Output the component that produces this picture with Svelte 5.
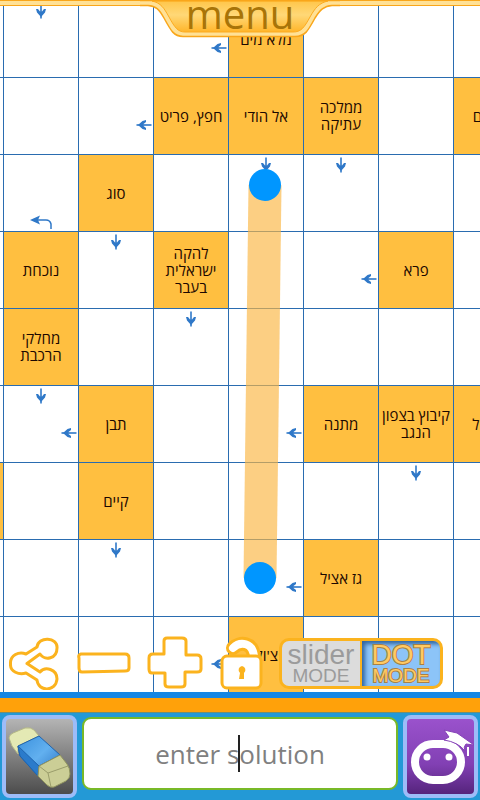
<script>
  const COLS = 8;
  const ROWS = 9;

  // Clue squares, keyed by "row-column"; each entry lists the text lines.
  const clues = {
    '0-4': ['מלא מים'],
    '1-3': ['חפץ, פריט'],
    '1-4': ['אל הודי'],
    '1-5': ['ממלכה', 'עתיקה'],
    '1-7': ['שמיים'],
    '2-2': ['סוג'],
    '3-1': ['נוכחת'],
    '3-3': ['להקה', 'ישראלית', 'בעבר'],
    '3-6': ['פרא'],
    '4-1': ['מחלקי', 'הרכבת'],
    '5-2': ['תבן'],
    '5-5': ['מתנה'],
    '5-6': ['קיבוץ בצפון', 'הנגב'],
    '5-7': ['מבוטל'],
    '6-0': [],
    '6-2': ['קיים'],
    '7-5': ['גז אציל'],
    '8-4': ["צ'וק"]
  };

  // Direction in which the answer is written from a square.
  const arrows = {
    '0-1': 'down', '2-4': 'down', '2-5': 'down', '3-2': 'down',
    '4-3': 'down', '5-1': 'down left', '6-6': 'down', '7-2': 'down',
    '0-3': 'left', '1-2': 'left', '3-5': 'left',
    '5-4': 'left', '7-4': 'left', '8-3': 'left', '2-1': 'turn'
  };

  const cells = Array.from({ length: COLS * ROWS }, (_, i) => {
    const key = `${Math.floor(i / COLS)}-${i % COLS}`;
    return { key, clue: clues[key], arrows: (arrows[key] ?? '').split(' ').filter(Boolean) };
  });

  let solution = $state('');
  let mode = $state('dot');
</script>

<main class="app">
  <section class="board">
    <div class="grid">
      {#each cells as cell (cell.key)}
        <div class="cell" class:clue={cell.clue}>
          {#if cell.clue}
            <div class="text" dir="rtl">
              {#each cell.clue as line}<span>{line}</span>{/each}
            </div>
          {/if}
          {#each cell.arrows as arrow}
            {#if arrow === 'turn'}
              <svg class="arrow turn" viewBox="0 0 22 16" width="22" height="16">
                <path d="M21 15V10Q20 6 16 6H4" fill="none" stroke="#2f78c8" stroke-width="1.5" />
                <path d="M0 6L10 1.500L8 6L10 10.500Z" fill="#2f78c8" />
              </svg>
            {:else}
              <svg class="arrow {arrow}" viewBox="0 0 16 16" width="16" height="16">
                <g transform={arrow === 'left' ? 'rotate(90 8 8)' : undefined}>
                  <path d="M8 0.500V15.500" fill="none" stroke="#2f78c8" stroke-width="1.600" />
                  <path d="M3 6L5 6L7 8.500H9L11 6L13 6L12 9.500L8 14L4 9.500Z" fill="#2f78c8" />
                </g>
              </svg>
            {/if}
          {/each}
        </div>
      {/each}
    </div>

    <svg class="selection" viewBox="0 0 480 692" width="480" height="692" aria-hidden="true">
      <path d="M265 185L260 578" stroke="#fbb643" stroke-opacity="0.66" stroke-width="33" />
      <circle cx="265" cy="185" r="16" fill="#0096ff" />
      <circle cx="260" cy="578" r="16" fill="#0096ff" />
    </svg>

    <header class="top">
      <button class="menu" type="button">
        <svg viewBox="0 0 200 38" width="200" height="38" aria-hidden="true">
          <defs>
            <linearGradient id="tab" x1="0" y1="0" x2="0" y2="1">
              <stop offset="0" stop-color="#ffc64a" />
              <stop offset="0.450" stop-color="#ffd877" />
              <stop offset="1" stop-color="#ffb52a" />
            </linearGradient>
          </defs>
          <path d="M0 0H200V5.500H192C184 6 180 10 175 18C168 31 165 36.500 155 36.500H43C34 36.500 31 31 24 18C19 9 16 6 8 5.500H0Z" fill="#ffe196" />
          <path d="M12 1H188C179 3 175 8 170 17C164 28 161 32 153 32H45C38 32 35 28 29 17C24 8 21 3 12 1Z" fill="url(#tab)" stroke="#fcab20" stroke-width="1" />
          <path d="M0 0.500H200" stroke="#f9a61a" stroke-width="1.500" />
          <path d="M0 5.500H8C16 6 19 9 24 18C31 31 34 36.500 43 36.500H155C165 36.500 168 31 175 18C180 10 184 6 192 5.500H200" fill="none" stroke="#f9a61a" stroke-width="1.500" />
        </svg>
        <span>menu</span>
      </button>
    </header>

    <div class="tools">
      <button class="tool share" type="button" aria-label="Share">
        <svg viewBox="0 0 52 54" width="52" height="54">
          <path d="M16 17L27 10C28 -1 48 0 47 11C47 22 35 24 30 17L17 26.500L30 35C35 29 47 32 47 42C46 55 28 55 27 43L16 36C9 38 0 35 0.500 27C0 18 9 14 16 17Z" transform="translate(1 1)" />
        </svg>
      </button>
      <button class="tool" type="button" aria-label="Zoom out">
        <svg viewBox="0 0 54 22" width="54" height="22">
          <path d="M4 2H48Q52 2 52 6V16Q52 19 48 19L5 20Q2 20 2 16V6Q1 3 4 2Z" />
        </svg>
      </button>
      <button class="tool plus" type="button" aria-label="Zoom in">
        <svg viewBox="0 0 56 54" width="56" height="54">
          <path d="M17 5Q17 2 20 2H35Q39 2 39 5V19H50Q54 19 54 23V33Q54 36 50 36H38V48Q38 51 34 51H22Q18 51 18 48V37H5Q2 37 2 33V22Q2 18 6 18H17Z" />
        </svg>
      </button>
      <button class="tool lock" type="button" aria-label="Unlock">
        <svg viewBox="0 0 44 54" width="44" height="54">
          <path class="shackle rim" d="M14 12C21 5 34 6 35 21" />
          <path class="shackle" d="M14 12C21 5 34 6 35 21" />
          <rect x="3" y="20" width="39" height="32" rx="5" />
          <path class="hole" d="M23 30A4 4 0 0 1 25 37L25 43H20L21 37A4 4 0 0 1 23 30Z" />
        </svg>
      </button>
      <div class="mode">
        <button type="button" aria-pressed={mode === 'slider'} class="slider" onclick={() => (mode = 'slider')}>
          <span class="name">slider</span><span class="word">MODE</span>
        </button>
        <button type="button" aria-pressed={mode === 'dot'} class="dot" onclick={() => (mode = 'dot')}>
          <span class="name">DOT</span><span class="word">MODE</span>
        </button>
      </div>
    </div>
  </section>

  <div class="stripe"></div>

  <footer class="entry">
    <button class="key erase" type="button" aria-label="Erase">
      <svg viewBox="0 0 64 64" width="64" height="64">
        <defs>
          <linearGradient id="sleeve" x1="0" y1="0" x2="1" y2="1">
            <stop offset="0" stop-color="#3b91dd" />
            <stop offset="0.500" stop-color="#62b0ef" />
            <stop offset="1" stop-color="#2a72c2" />
          </linearGradient>
        </defs>
        <g stroke-width="1" stroke-linejoin="round">
          <path d="M1 13Q1 10 5 8L17 3Q23 2 26 5L31 11L10 21V29L4 21Z" fill="#e4e9b4" stroke="#b4b887" />
          <path d="M10 21L31 11L52 30L31 41L30 51L12 31Z" fill="url(#sleeve)" stroke="#1f64ae" />
          <path d="M10 21L31 41L30 51L12 31Z" fill="#2b7bcb" stroke="#1f64ae" />
          <path d="M31 41L52 30L59 39Q62 43 62 49Q62 53 58 56L46 62Q42 63 39 60L30 51Z" fill="#cbce96" stroke="#90945f" />
          <path d="M31 41L40 48L60 41M40 48L43 62" fill="none" stroke="#9a9d6b" />
        </g>
      </svg>
    </button>
    <div class="field">
      <input type="text" aria-label="Solution" placeholder="enter solution" bind:value={solution} />
      <i class="caret"></i>
    </div>
    <button class="key robot" type="button" aria-label="Hint">
      <svg viewBox="0 0 66 56" width="66" height="56">
        <rect x="7" y="15" width="46" height="36" rx="18" fill="none" stroke="#fff" stroke-width="8" />
        <circle cx="19" cy="28" r="3.500" fill="#fff" />
        <circle cx="41" cy="28" r="3.500" fill="#fff" />
        <path d="M36 1L49 4L66 16L58 15Q55 18 57 22Q50 13 36 11L41 8Z" fill="#fff" stroke="#8743b8" stroke-width="1" />
        <path d="M60 18V27" stroke="#fff" stroke-width="2" />
      </svg>
    </button>
  </footer>
</main>

<style>
  :global(body) {
    margin: 0;
  }

  .app {
    display: flex;
    flex-direction: column;
    height: 100vh;
    overflow: hidden;
    background: #fff;
    font-family: 'Open Sans', 'Noto Sans', 'DejaVu Sans', sans-serif;
  }

  button {
    margin: 0;
    padding: 0;
    border: 0;
    background: none;
    font: inherit;
    cursor: pointer;
  }

  svg {
    display: block;
  }

  .board {
    position: relative;
    flex: 1 1 0;
    min-height: 0;
    overflow: hidden;
  }

  .grid {
    display: grid;
    grid-template-columns: repeat(8, 75px);
    grid-auto-rows: 77px;
    width: max-content;
    margin: 1px 0 0 -71px;
  }

  .cell {
    position: relative;
    display: flex;
    align-items: center;
    justify-content: center;
    border: solid #2a6cb0;
    border-width: 0 1px 1px 0;
  }

  .clue {
    background: #ffbf40;
  }

  .text {
    display: flex;
    flex-direction: column;
    align-items: center;
    color: #1c0800;
    font-size: 15px;
    line-height: 17px;
    white-space: nowrap;
  }

  .arrow {
    position: absolute;
  }

  .down {
    top: 2px;
    left: 29px;
  }

  .left {
    top: 39px;
    right: 1px;
  }

  .turn {
    right: 26px;
    bottom: 1px;
  }

  .selection {
    position: absolute;
    top: 0;
    left: 0;
  }

  .top {
    position: absolute;
    top: 0;
    left: 0;
    right: 0;
    display: flex;
    justify-content: center;
    align-items: flex-start;
    height: 6px;
    box-sizing: border-box;
    background: linear-gradient(#f9a61a 0 1px, #ffe196 1px 5px, #f9a61a 5px);
  }

  .menu {
    position: relative;
  }

  .menu span {
    position: absolute;
    top: 0;
    left: 0;
    right: 0;
    color: #a87408;
    font-size: 40px;
    font-weight: 500;
    line-height: 28px;
    text-align: center;
  }

  .tools {
    position: absolute;
    left: 9px;
    bottom: 2px;
    display: flex;
    align-items: center;
    gap: 16px;
  }

  .tool path,
  .tool rect {
    fill: #fff;
    stroke: #fbb31e;
    stroke-width: 3;
    stroke-linejoin: round;
  }

  .tool .hole {
    fill: #fbb31e;
    stroke: none;
  }

  .tool .shackle {
    fill: none;
    stroke: #fff;
    stroke-width: 8;
    stroke-linecap: round;
  }

  .tool .rim {
    stroke: #fbb31e;
    stroke-width: 14;
  }

  .mode {
    display: flex;
    width: 164px;
    height: 51px;
    box-sizing: border-box;
    overflow: hidden;
    border: 3px solid #fbb31e;
    border-radius: 10px;
    background: #fbb31e;
    font-family: 'Liberation Sans', Arial, sans-serif;
  }

  .mode button {
    display: flex;
    flex: 1;
    flex-direction: column;
    align-items: center;
    justify-content: center;
  }

  .mode .slider {
    margin-right: 2px;
    background: #dcdcdc;
    color: #9b9b9b;
  }

  .mode .dot {
    background: #8cc4f8;
    box-shadow: inset 3px 3px 4px #2f64a0;
    color: #ffca62;
    paint-order: stroke fill;
    -webkit-text-stroke: 2px #a98045;
  }

  .name {
    font-size: 28px;
    line-height: 25px;
  }

  .word {
    font-size: 19px;
    line-height: 18px;
  }

  .stripe {
    height: 14px;
    border-top: 6px solid #1687e4;
    border-bottom: 1px solid #6d8f78;
    background: #ffa10a;
  }

  .entry {
    display: flex;
    align-items: stretch;
    gap: 5px;
    height: 87px;
    box-sizing: border-box;
    padding: 2px;
    background: #2399d6;
  }

  .key {
    display: flex;
    flex: none;
    align-items: center;
    justify-content: center;
    width: 75px;
    box-sizing: border-box;
    border: 4px solid #9dbcf8;
    border-radius: 8px;
  }

  .erase {
    background: linear-gradient(#b4b4b4, #4c4c4c);
  }

  .robot {
    background: linear-gradient(#9a52cc, #8240b4 60%, #55247c);
  }

  .field {
    position: relative;
    display: flex;
    flex: 1;
    min-width: 0;
    margin: 2px 0 8px;
  }

  input {
    width: 100%;
    min-width: 0;
    box-sizing: border-box;
    padding: 0;
    border: 2px solid #78b928;
    border-radius: 9px;
    outline: 0;
    background: #fff;
    color: #222;
    font: 26px 'Open Sans', 'Noto Sans', sans-serif;
    text-align: center;
  }

  input::placeholder {
    color: #808080;
    opacity: 1;
  }

  .caret {
    position: absolute;
    top: 18px;
    bottom: 18px;
    left: calc(50% - 2px);
    width: 2px;
    background: #222;
  }
</style>
